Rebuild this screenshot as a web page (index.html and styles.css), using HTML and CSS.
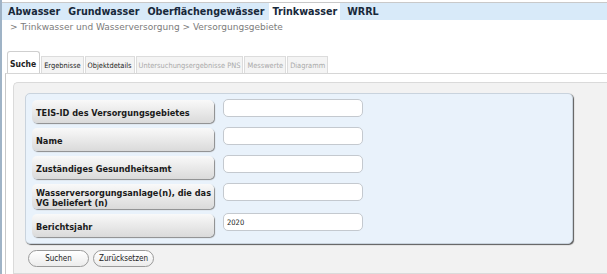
FILE: index.html
```html
<!DOCTYPE html>
<html>
<head>
  <title>Versorgungsgebiete</title>
  <link rel="stylesheet" href="styles.css">
</head>
<body>
  <!-- Main navigation -->
  <ul class="topnav">
    <li>Abwasser</li>
    <li>Grundwasser</li>
    <li>Oberflächengewässer</li>
    <li class="active">Trinkwasser</li>
    <li>WRRL</li>
  </ul>

  <div class="breadcrumb">&gt; Trinkwasser und Wasserversorgung &gt; Versorgungsgebiete</div>

  <ul class="tabs">
    <li class="tab active">Suche</li>
    <li class="tab">Ergebnisse</li>
    <li class="tab">Objektdetails</li>
    <li class="tab disabled">Untersuchungsergebnisse PNS</li>
    <li class="tab disabled">Messwerte</li>
    <li class="tab disabled">Diagramm</li>
  </ul>

  <div class="tab-panel">
    <div class="search-panel">
      <div class="search-box">
        <div class="search-row">
          <div class="field-label">TEIS-ID des Versorgungsgebietes</div>
          <input type="text" class="field-input">
        </div>
        <div class="search-row">
          <div class="field-label">Name</div>
          <input type="text" class="field-input">
        </div>
        <div class="search-row">
          <div class="field-label">Zuständiges Gesundheitsamt</div>
          <input type="text" class="field-input">
        </div>
        <div class="search-row">
          <div class="field-label two-lines">Wasserversorgungsanlage(n), die das<br>VG beliefert (n)</div>
          <input type="text" class="field-input">
        </div>
        <div class="search-row">
          <div class="field-label">Berichtsjahr</div>
          <input type="text" class="field-input" value="2020">
        </div>
      </div>

      <div class="button-row">
        <button class="pill-button">Suchen</button>
        <button class="pill-button">Zurücksetzen</button>
      </div>
    </div>
  </div>
</body>
</html>
```

FILE: styles.css
```css
body {
  margin: 0;
  padding-top: 2px;
  border-left: 2px solid #9fb3c6;
  min-height: 272px;
  background-color: #fff;
  font-family: "DejaVu Sans", Verdana, sans-serif;
  color: #1d2630;
}

/* Top navigation */
.topnav {
  list-style: none;
  margin: 0;
  padding: 0 0 0 2px;
  display: flex;
  height: 17px;
  border-top: 1px solid #c9c9c9;
  background-color: #d8eaf9;
}

.topnav li {
  padding: 0 4px;
  font-size: 9.6px;
  font-weight: bold;
  line-height: 17px;
  color: #17283a;
}

.topnav li.active {
  background-color: #fff;
  padding: 0 3px 0 4px;
  margin-right: 3px;
}

.breadcrumb {
  padding: 2px 0 0 8px;
  height: 17px;
  font-size: 9px;
  color: #7b7b7b;
}

/* Tabs */
.tabs {
  list-style: none;
  margin: 0;
  padding: 12px 0 0 5px;
  display: flex;
  align-items: flex-end;
  font-family: "DejaVu Sans Condensed", "DejaVu Sans", sans-serif;
  font-stretch: condensed;
}

.tab {
  height: 16px;
  line-height: 17px;
  padding: 0 2px;
  margin-right: 1px;
  font-size: 7.4px;
  color: #222;
  background-color: #f4f4f4;
  border: 1px solid #dcdcdc;
  border-bottom: none;
}

.tab.active {
  height: 21px;
  line-height: 25px;
  padding: 0 3px 0 2px;
  font-size: 8.5px;
  font-weight: bold;
  background-color: #fff;
  border-color: #cfcfcf;
  border-radius: 3px 3px 0 0;
}

.tab.disabled {
  color: #a9a9a9;
}

.tab-panel {
  margin-left: 3px;
  border-left: 1px solid #c8c8c8;
  border-top: 1px solid #d6d6d6;
  padding: 8px 0 0 7px;
}

.search-panel {
  background-color: #f2f2f2;
  border: 1px solid #dadada;
  border-right: none;
  border-radius: 5px 0 0 0;
  padding: 10px 0 6px 14px;
}

.search-box {
  width: 534px;
  margin-left: -3px;
  padding: 6px;
  background-color: #e9f2fb;
  border: 1px solid #c9d3dd;
  border-radius: 5px;
  box-shadow: 1px 1px 1px #5a5a5a;
}

.search-row {
  display: flex;
  align-items: flex-start;
  gap: 9px;
  margin-bottom: 5px;
}

.search-row:last-child {
  margin-bottom: 0;
  margin-top: 5px;
}

.field-label {
  box-sizing: border-box;
  width: 182px;
  height: 23px;
  display: flex;
  align-items: center;
  padding: 2px 0 0 4px;
  font-size: 8.2px;
  font-weight: bold;
  line-height: 10px;
  white-space: nowrap;
  color: #1a1a1a;
  background: linear-gradient(#f9f9f9, #dadada);
  border-radius: 5px;
  box-shadow: 1px 1px 1px #8a8a8a;
}

.field-label.two-lines {
  height: 25px;
}

.field-input {
  box-sizing: border-box;
  width: 140px;
  height: 18px;
  margin: -1px 0 0 0;
  padding: 0 3px;
  font-family: "DejaVu Sans Condensed", "DejaVu Sans", sans-serif;
  font-size: 7.5px;
  color: #222;
  background-color: #fff;
  border: 1px solid #c4c9cf;
  border-radius: 5px;
  outline: none;
}

/* Buttons below the box */
.button-row {
  display: flex;
  gap: 4px;
  margin-top: 6px;
}

.pill-button {
  width: 61px;
  height: 17px;
  padding: 0;
  font-family: "DejaVu Sans Condensed", "DejaVu Sans", sans-serif;
  font-stretch: condensed;
  font-size: 8px;
  color: #222;
  background: linear-gradient(#ffffff, #ececec);
  border: 1px solid #9a9a9a;
  border-radius: 9px;
}
```
